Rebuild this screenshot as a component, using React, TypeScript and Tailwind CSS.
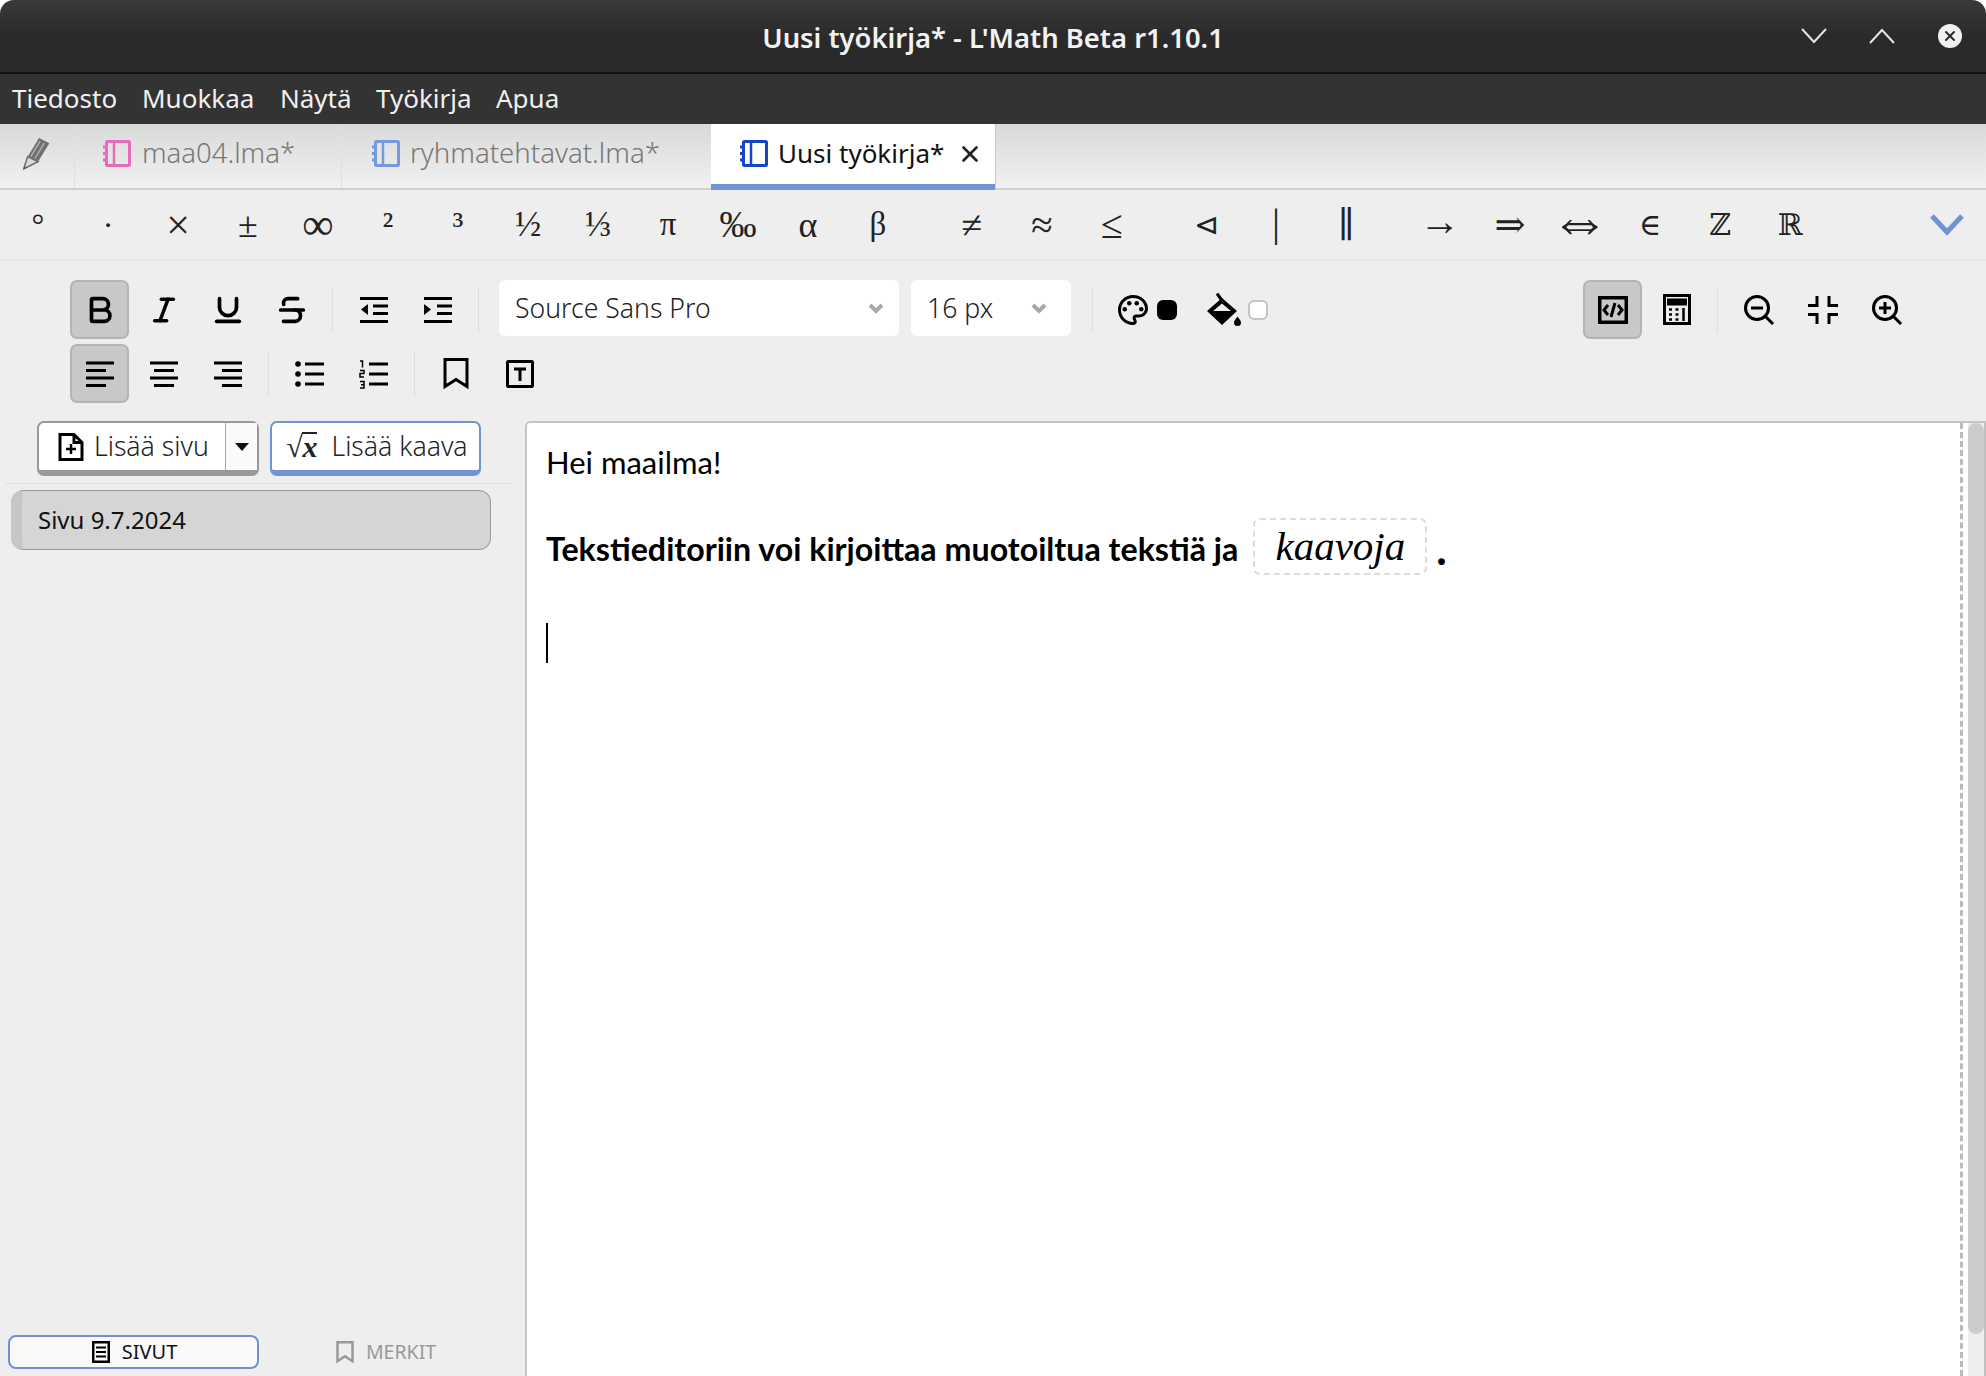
import { Bold, Italic, Strikethrough, Underline, X } from 'lucide-react';
import { MdOutlinePalette } from 'react-icons/md';
import type { ReactNode } from 'react';

// size per glyph, the fallback glyphs come out smaller than in the app
const symbolGroups = [
  [
    { s: '°', c: 'text-[32px]' },
    { s: '·', c: 'text-[32px]' },
    { s: '×', c: 'text-[42px] font-light' },
    { s: '±', c: 'text-[36px]' },
    { s: '∞', c: 'text-[44px]' },
    { s: '²', c: 'text-[36px]' },
    { s: '³', c: 'text-[36px]' },
    { s: '½', c: 'text-[35px]' },
    { s: '⅓', c: 'text-[35px]' },
    { s: 'π', c: 'text-[33px]' },
    { s: '‰', c: 'text-[37px]' },
    { s: 'α', c: 'text-[36px]' },
    { s: 'β', c: 'text-[33px]' },
  ],
  [
    { s: '≠', c: 'text-[38px]' },
    { s: '≈', c: 'text-[39px]' },
    { s: '≤', c: 'text-[40px]' },
  ],
  [
    { s: '⊲', c: 'text-[30px]' },
    { s: '|', c: 'pb-[4px] text-[40px] font-light' },
    { s: '∥', c: 'text-[36px]' },
  ],
  [
    { s: '→', c: 'pb-[7px] text-[41px]' },
    { s: '⇒', c: 'text-[37px]' },
    { s: '⇔', c: 'pb-[7px] text-[60px]' },
    { s: '∈', c: 'text-[30px]' },
    { s: 'ℤ', c: 'text-[30px]' },
    { s: 'ℝ', c: 'text-[30px]' },
  ],
];

const Notebook = ({ color }: { color: string }) => (
  <svg width="28" height="27" viewBox="0 0 28 27" fill="none" stroke={color} strokeWidth="3">
    <rect x="3.500" y="1.500" width="23" height="24" rx="1" />
    <path d="M11 1.500v24" strokeWidth="2.500" />
    <path d="M0 7h3.500M0 13.500h3.500M0 20h3.500" strokeWidth="3" />
  </svg>
);

const Pencil = () => (
  <svg width="28" height="33" viewBox="0 0 26 32">
    <path d="M15 1l10 5-11 18-10-5z" fill="#707070" />
    <path d="M4 19l10 5-14 7z" fill="#d8d8d8" stroke="#707070" strokeWidth="1.500" />
    <path d="M0 31l3-1-2-2z" fill="#555" />
    <path d="M16 4L7 19M20 6l-9 15" stroke="#adadad" strokeWidth="1.500" />
  </svg>
);

const Btn = ({ active, children }: { active?: boolean; children: ReactNode }) => (
  <div
    className={`flex h-[59px] w-[59px] items-center justify-center rounded-[7px] border-2 ${
      active ? 'border-[#b4b4b4] bg-[#c8c8c8]' : 'border-transparent'
    }`}
  >
    {children}
  </div>
);

const Sep = ({ className = 'mx-[11px]' }: { className?: string }) => (
  <div className={`h-[46px] w-px bg-[#dedede] ${className}`} />
);

const BarIcon = ({ d, tri }: { d: string; tri?: string }) => (
  <svg width="30" height="30" viewBox="0 0 30 30" fill="none" stroke="#000" strokeWidth="3">
    <path d={d} />
    {tri && <path d={tri} fill="#000" stroke="none" />}
  </svg>
);

const Caret = () => (
  <svg width="16" height="11" viewBox="0 0 16 11" fill="none" stroke="#a8a8a8" strokeWidth="4">
    <path d="M2 2l6 6 6-6" />
  </svg>
);

const FontSelect = ({ label, className }: { label: string; className: string }) => (
  <div className={`flex h-[56px] items-center justify-between self-start rounded-[6px] bg-white pl-[16px] text-[26.600px] font-light text-[#222] ${className}`}>
    <span className="pt-[2px]">{label}</span>
    <Caret />
  </div>
);

const Swatch = ({ className }: { className: string }) => (
  <div className={`h-[20px] w-[20px] rounded-[6px] ${className}`} />
);

export default function App() {
  return (
    <div className="flex h-[1376px] w-[1986px] flex-col overflow-hidden bg-white font-['Noto_Sans',sans-serif]">
      <div className="grid h-[74px] shrink-0 grid-cols-[1fr_auto_1fr] items-center rounded-t-[14px] border-b-2 border-[#111] bg-gradient-to-b from-[#3a3a3a] via-[#2a2a2a] to-[#292929]">
        <div />
        <div className="pt-[3px] text-[27.400px] font-semibold text-[#f2f2f2]">Uusi työkirja* - L'Math Beta r1.10.1</div>
        <div className="flex items-center justify-end pr-[24px]">
          <svg width="26" height="18" viewBox="0 0 26 18" fill="none" stroke="#e6e6e6" strokeWidth="2">
            <path d="M1 2l12 13L25 2" />
          </svg>
          <svg className="ml-[42px]" width="26" height="18" viewBox="0 0 26 18" fill="none" stroke="#e6e6e6" strokeWidth="2">
            <path d="M1 16L13 3l12 13" />
          </svg>
          <div className="ml-[43px] flex h-[24px] w-[24px] items-center justify-center rounded-full bg-[#f0f0f0]">
            <X size={16} strokeWidth={3} color="#2a2a2a" />
          </div>
        </div>
      </div>

      <div className="flex h-[50px] shrink-0 items-center bg-[#333333] pb-[2px] pl-[12px] text-[26px] text-[#f0f0f0]">
        <span className="w-[130px]">Tiedosto</span>
        <span className="w-[138px]">Muokkaa</span>
        <span className="w-[96px]">Näytä</span>
        <span className="w-[120px]">Työkirja</span>
        <span>Apua</span>
      </div>

      <div className="flex h-[66px] shrink-0 border-b-2 border-[#d0d0d0] bg-gradient-to-b from-[#d9d9d9] to-[#f1f1f1] text-[26px] text-[#777]">
        <div className="flex w-[75px] items-center justify-center border-r border-[#e0e0e0] pb-[5px]">
          <Pencil />
        </div>
        <div className="flex w-[267px] items-center border-r border-[#e0e0e0] pb-[6px] pl-[28px]">
          <Notebook color="#e56cb8" />
          <span className="ml-[11px] text-[27.500px] font-light">maa04.lma*</span>
        </div>
        <div className="flex w-[369px] items-center pb-[6px] pl-[30px]">
          <Notebook color="#7699dd" />
          <span className="ml-[10px] text-[27.600px] font-light">ryhmatehtavat.lma*</span>
        </div>
        <div className="mb-[-2px] flex w-[284px] items-center border-b-[6px] border-[#6f94d6] bg-white pb-[1px] pl-[29px] text-[#111]">
          <Notebook color="#1446c8" />
          <span className="ml-[10px]">Uusi työkirja*</span>
          <X className="ml-[13px]" size={26} strokeWidth={2.5} color="#222" />
        </div>
        <div className="w-px bg-[#c9c9c9]" />
      </div>

      <div className="flex h-[71px] shrink-0 items-center border-b-2 border-[#e6e6e6] bg-[#eeeeee] pl-[3px] pr-[22px] font-['Liberation_Serif','DejaVu_Serif',serif] text-[#222]">
        {symbolGroups.map((group) => (
          <div key={group[0].s} className="mr-[24px] flex items-center">
            {group.map((item) => (
              <span key={item.s} className={`flex h-[50px] w-[70px] items-center justify-center leading-none ${item.c}`}>
                {item.s}
              </span>
            ))}
          </div>
        ))}
        <svg className="ml-auto" width="34" height="22" viewBox="0 0 34 22" fill="none" stroke="#6f94d6" strokeWidth="5">
          <path d="M2 2l15 16L32 2" />
        </svg>
      </div>

      <div className="flex h-[160px] shrink-0 flex-col gap-[5px] bg-[#eeeeee] pl-[70px] pr-[70px] pt-[19px]">
        <div className="flex items-center">
          <div className="flex gap-[5px]">
            <Btn active><Bold size={34} strokeWidth={2.600} color="#000" /></Btn>
            <Btn><Italic size={32} strokeWidth={2.600} color="#000" /></Btn>
            <Btn><Underline size={34} strokeWidth={2.600} color="#000" /></Btn>
            <Btn><Strikethrough size={34} strokeWidth={2.600} color="#000" /></Btn>
          </div>
          <Sep />
          <div className="flex gap-[5px]">
            <Btn><BarIcon d="M1 3.500h28M14 11h15M14 18.500h15M1 26.500h28" tri="M9 9v11l-7-5.500z" /></Btn>
            <Btn><BarIcon d="M1 3.500h28M14 11h15M14 18.500h15M1 26.500h28" tri="M1 9v11l7-5.500z" /></Btn>
          </div>
          <Sep />
          <div className="ml-[9px] mt-[-3px] flex gap-[12px]">
            <FontSelect label="Source Sans Pro" className="w-[400px] pr-[15px]" />
            <FontSelect label="16 px" className="w-[160px] pr-[24px]" />
          </div>
          <Sep className="ml-[21px] mr-[22px]" />
          <MdOutlinePalette size={36} color="#000" />
          <Swatch className="ml-[6px] bg-black" />
          <svg className="ml-[30px]" width="35" height="33" viewBox="0 0 35 33" fill="#000">
            <path d="M15 5l15 13-15 14L0 18zM15 10.500L6 18h18z" fillRule="evenodd" />
            <path d="M10 0.500l6.500 9" fill="none" stroke="#000" strokeWidth="3" />
            <path d="M30.500 23.500c-2 3-3.500 4.500-3.500 6a3.500 3.500 0 0 0 7 0c0-1.500-1.500-3-3.500-6z" />
          </svg>
          <Swatch className="ml-[6px] border-2 border-[#c4c4c4] bg-white" />
          <div className="ml-auto flex gap-[5px]">
            <Btn active>
              <svg width="30" height="28" viewBox="0 0 30 28" fill="none" stroke="#000" strokeWidth="3.500">
                <rect x="1.750" y="1.750" width="26.500" height="24.500" />
                <path d="M10 9l-4 5 4 5M20 9l4 5-4 5M17 7l-4 14" strokeWidth="3" />
              </svg>
            </Btn>
            <Btn>
              <svg width="28" height="31" viewBox="0 0 28 31" fill="none" stroke="#000" strokeWidth="3">
                <rect x="1.500" y="1.500" width="25" height="28" />
                <path d="M4 8h20" strokeWidth="7" />
                <path d="M6 15.500h3M12.500 15.500h3M6 20.500h3M12.500 20.500h3M6 25.500h3M12.500 25.500h3M20.500 14v13" strokeWidth="2.500" />
              </svg>
            </Btn>
          </div>
          <Sep />
          <div className="flex gap-[5px]">
            <Btn>
              <svg width="32" height="32" viewBox="0 0 32 32" fill="none" stroke="#000" strokeWidth="3">
                <circle cx="14" cy="14" r="11.500" />
                <path d="M22 22l8 8M8 14h12" />
              </svg>
            </Btn>
            <Btn>
              <svg width="30" height="28" viewBox="0 0 30 28" fill="none" stroke="#000" strokeWidth="3">
                <path d="M0 9.500h9V0M21 0v9.500h9M0 18.500h9V28M21 28v-9.500h9" />
              </svg>
            </Btn>
            <Btn>
              <svg width="32" height="32" viewBox="0 0 32 32" fill="none" stroke="#000" strokeWidth="3">
                <circle cx="14" cy="14" r="11.500" />
                <path d="M22 22l8 8M8 14h12M14 8v12" />
              </svg>
            </Btn>
          </div>
        </div>
        <div className="flex items-center">
          <div className="flex gap-[5px]">
            <Btn active><BarIcon d="M1 4h28M1 11.500h20M1 19h28M1 26.500h20" /></Btn>
            <Btn><BarIcon d="M1 4h28M5 11.500h20M1 19h28M5 26.500h20" /></Btn>
            <Btn><BarIcon d="M1 4h28M9 11.500h20M1 19h28M9 26.500h20" /></Btn>
          </div>
          <Sep />
          <div className="flex gap-[5px]">
            <Btn>
              <svg width="30" height="30" viewBox="0 0 30 30" fill="#000">
                <circle cx="3" cy="5" r="2.800" />
                <circle cx="3" cy="15" r="2.800" />
                <circle cx="3" cy="25" r="2.800" />
                <path d="M10 3.500h19v3H10zM10 13.500h19v3H10zM10 23.500h19v3H10z" />
              </svg>
            </Btn>
            <Btn>
              <svg width="30" height="30" viewBox="0 0 30 30" fill="none" stroke="#000">
                <path d="M1 2h2.500v6.500M1 11.500h4v3H1v3.500h4M1 22.500h4v6.500H1M2 25.700h3" strokeWidth="1.500" />
                <path d="M10 5h19M10 15h19M10 25h19" strokeWidth="3" />
              </svg>
            </Btn>
          </div>
          <Sep />
          <div className="flex gap-[5px]">
            <Btn>
              <svg width="26" height="32" viewBox="0 0 26 32" fill="none" stroke="#000" strokeWidth="3">
                <path d="M2 1.500h22v27l-11-7-11 7z" />
              </svg>
            </Btn>
            <Btn>
              <svg width="28" height="28" viewBox="0 0 28 28" fill="none" stroke="#000" strokeWidth="3">
                <rect x="1.500" y="1.500" width="25" height="25" rx="1" />
                <path d="M8 9h12M14 9v12" />
              </svg>
            </Btn>
          </div>
        </div>
      </div>

      <div className="flex min-h-0 flex-1">
        <div className="flex w-[525px] shrink-0 flex-col bg-[#eeeeee]">
          <div className="flex h-[55px] gap-[11px] pl-[37px] text-[26.600px] font-light text-[#222]">
            <div className="flex w-[222px] rounded-[7px] border-2 border-b-[6px] border-[#999] bg-white">
              <div className="flex flex-1 items-center border-r border-[#aaa] pl-[19px]">
                <svg width="26" height="28" viewBox="0 0 26 28" fill="none" stroke="#000" strokeWidth="3">
                  <path d="M2 1.500h14l8 8v17H2zM16 1.500v8h8" />
                  <path d="M8 16h10M13 11v10" strokeWidth="2.500" />
                </svg>
                <span className="ml-[10px] pt-[1px]">Lisää sivu</span>
              </div>
              <div className="flex w-[31px] items-center justify-center bg-[#fafafa]">
                <svg width="14" height="8" viewBox="0 0 14 8" fill="#111">
                  <path d="M0 0h14L7 8z" />
                </svg>
              </div>
            </div>
            <div className="flex w-[211px] items-center rounded-[7px] border-2 border-b-[6px] border-[#6f94d6] bg-white pl-[14px]">
              <span className="flex items-start font-['Liberation_Serif',serif] text-[30px] font-bold italic leading-[30px] text-[#222]">
                √<span className="border-t-2 border-[#222] leading-[26px]">x</span>
              </span>
              <span className="ml-[14px] pt-[1px]">Lisää kaava</span>
            </div>
          </div>
          <div className="ml-[5px] mt-[7px] h-px w-[507px] bg-[#e0e0e0]" />
          <div className="ml-[11px] mt-[6px] flex h-[60px] w-[480px] items-center rounded-[12px] border border-[#999] bg-[#d5d5d5] border-l-[11px] border-l-[#c6c6c6] pl-[16px] text-[24px] text-[#111]">
            Sivu 9.7.2024
          </div>
          <div className="mb-[7px] mt-auto flex items-center pl-[8px] text-[20px]">
            <div className="flex h-[34px] w-[251px] items-center justify-center gap-[12px] rounded-[8px] border-2 border-[#6f8fd0] bg-[#fafafa] pl-[2px] text-[#111]">
              <svg width="18" height="22" viewBox="0 0 18 22" fill="none" stroke="#000" strokeWidth="2.500">
                <rect x="1.250" y="1.250" width="15.500" height="19.500" />
                <path d="M4 6.500h10M4 11h10M4 15.500h10" strokeWidth="2" />
              </svg>
              <span>SIVUT</span>
            </div>
            <div className="flex w-[250px] items-center justify-center gap-[12px] pl-[4px] text-[19.500px] text-[#999]">
              <svg width="18" height="23" viewBox="0 0 18 23" fill="none" stroke="#999" strokeWidth="2.500">
                <path d="M1.500 1.250h15v19l-7.500-5-7.500 5z" />
              </svg>
              <span>MERKIT</span>
            </div>
          </div>
        </div>

        <div className="flex min-w-0 flex-1 rounded-tl-[5px] border-l-2 border-t-2 border-[#c4c4c4] bg-white">
          <div className="flex-1 border-r-[3px] border-dashed border-[#bbbbbb] pl-[19px] pt-[17px] font-['Lato',sans-serif] text-[31px] text-black">
            <p className="leading-[44px]">Hei maailma!</p>
            <div className="mt-[34px] flex h-[57px] items-center text-[32.200px] font-bold">
              <span className="pt-[6px]">Tekstieditoriin voi kirjoittaa muotoiltua tekstiä ja</span>
              <span className="ml-[15px] flex h-[57px] w-[174px] items-center justify-center rounded-[7px] border-2 border-dashed border-[#dcdcdc] font-['Liberation_Serif',serif] text-[41px] font-normal italic">
                kaavoja
              </span>
              <span className="ml-[9px] pt-[6px] text-[42px] font-black">.</span>
            </div>
            <div className="mt-[48px] h-[40px] w-[2px] bg-black" />
          </div>
          <div className="ml-[5px] w-[16px] shrink-0 bg-[#eeeeee]">
            <div className="h-[911px] rounded-b-[10px] rounded-t-[10px] bg-[#cccccc]" />
          </div>
          <div className="w-[2px] shrink-0 bg-[#c0c0c0]" />
        </div>
      </div>
    </div>
  );
}
